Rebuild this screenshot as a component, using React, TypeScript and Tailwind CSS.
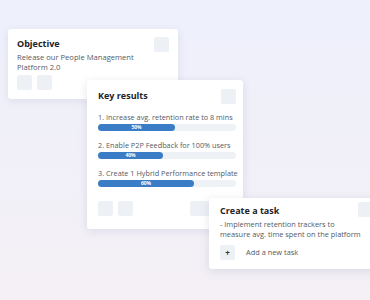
const font = { fontFamily: '"Open Sans", "Liberation Sans", sans-serif' };

const Square = ({ className = "" }: { className?: string }) => (
  <div className={"w-[15px] h-[15px] rounded-[2px] bg-[#edf1f6] " + className} />
);

const results = [
  { label: "1. Increase avg. retention rate to 8 mins", pct: "50%", fill: "w-[77px]" },
  { label: "2. Enable P2P Feedback for 100% users", pct: "40%", fill: "w-[65px]" },
  { label: "3. Create 1 Hybrid Performance template", pct: "60%", fill: "w-[96px]" },
];

export default function App() {
  return (
    <div
      className="relative w-[370px] h-[300px] overflow-hidden bg-gradient-to-b from-[#eef0fc] to-[#f4f0f5]"
      style={font}
    >
      {/* objective */}
      <div className="absolute left-[8px] top-[29px] w-[170px] h-[70px] bg-white rounded-[3px] shadow-[0_2px_8px_rgba(90,90,140,0.12)] px-[9px] pt-[8px]">
        <div className="flex justify-between items-start">
          <h2 className="text-[9px] font-bold text-[#1f2328] leading-[12px] mt-[1px]">Objective</h2>
          <Square />
        </div>
        <p className="text-[7.6px] text-[#555a64] leading-[10px] whitespace-nowrap">
          Release our People Management
          <br />
          Platform 2.0
        </p>
        <div className="flex gap-[5px] mt-[3px]">
          <Square />
          <Square />
        </div>
      </div>

      {/* key results */}
      <div className="absolute left-[87px] top-[80px] w-[156px] h-[149px] bg-white rounded-[3px] shadow-[0_2px_10px_rgba(90,90,140,0.14)] px-[11px] pt-[9px]">
        <div className="flex justify-between items-start">
          <h2 className="text-[9px] font-bold text-[#1f2328] leading-[12px] mt-[1px]">Key results</h2>
          <Square className="mr-[-4px]" />
        </div>
        <div className="flex flex-col gap-[9px] mt-[8px]">
          {results.map((r) => (
            <div key={r.label} className="flex flex-col gap-[2px]">
              <span className="text-[7.3px] text-[#555a64] leading-[10px] whitespace-nowrap">{r.label}</span>
              <div className="h-[7px] w-[138px] rounded-full bg-[#eef2f7]">
                <div
                  className={
                    "h-full rounded-full bg-[#3a7cc6] flex items-center justify-center text-[5px] font-bold text-white " +
                    r.fill
                  }
                >
                  {r.pct}
                </div>
              </div>
            </div>
          ))}
        </div>
        <div className="flex gap-[5px] mt-[14px]">
          <Square />
          <Square />
          <Square className="ml-auto mr-[17px] w-[25px]" />
        </div>
      </div>

      {/* create a task */}
      <div className="absolute left-[209px] top-[198px] w-[170px] h-[71px] bg-white rounded-[3px] shadow-[0_2px_10px_rgba(90,90,140,0.16)] px-[11px] pt-[6px]">
        <div className="flex justify-between items-start">
          <h2 className="text-[9px] font-bold text-[#1f2328] leading-[12px] mt-[1px]">Create a task</h2>
          <Square className="mr-[-5px] mt-[-2px]" />
        </div>
        <p className="text-[7.4px] text-[#555a64] leading-[10px] mt-[2px] whitespace-nowrap">
          - Implement retention trackers to
          <br />
          measure avg. time spent on the platform
        </p>
        <div className="flex items-center gap-[11px] mt-[6px]">
          <div className="w-[15px] h-[15px] rounded-[2px] bg-[#edf1f6] flex items-center justify-center text-[8px] font-bold text-[#333] leading-none">
            +
          </div>
          <span className="text-[7.4px] text-[#555a64]">Add a new task</span>
        </div>
      </div>
    </div>
  );
}
